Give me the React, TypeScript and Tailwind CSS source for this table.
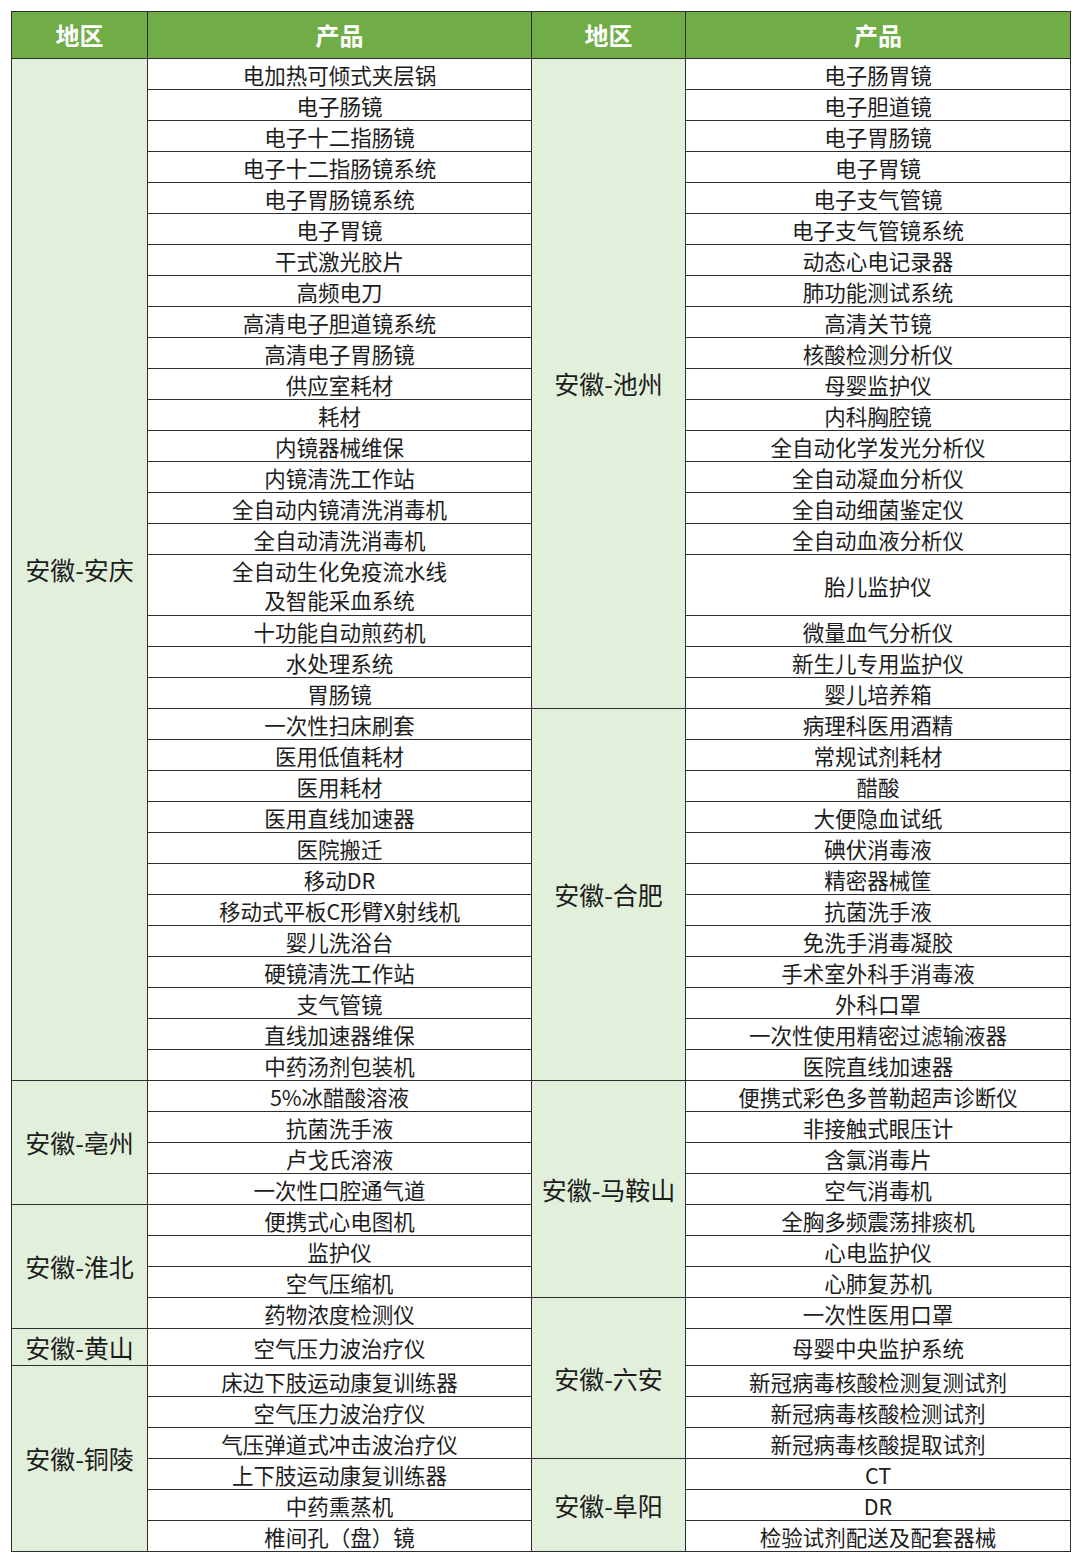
const left: [string, number][] = [
  ["安徽-安庆", 32],
  ["安徽-亳州", 4],
  ["安徽-淮北", 4],
  ["安徽-黄山", 1],
  ["安徽-铜陵", 6],
];

const right: [string, number][] = [
  ["安徽-池州", 20],
  ["安徽-合肥", 12],
  ["安徽-马鞍山", 7],
  ["安徽-六安", 5],
  ["安徽-阜阳", 3],
];

const leftProducts = [
  "电加热可倾式夹层锅",
  "电子肠镜",
  "电子十二指肠镜",
  "电子十二指肠镜系统",
  "电子胃肠镜系统",
  "电子胃镜",
  "干式激光胶片",
  "高频电刀",
  "高清电子胆道镜系统",
  "高清电子胃肠镜",
  "供应室耗材",
  "耗材",
  "内镜器械维保",
  "内镜清洗工作站",
  "全自动内镜清洗消毒机",
  "全自动清洗消毒机",
  "全自动生化免疫流水线\n及智能采血系统",
  "十功能自动煎药机",
  "水处理系统",
  "胃肠镜",
  "一次性扫床刷套",
  "医用低值耗材",
  "医用耗材",
  "医用直线加速器",
  "医院搬迁",
  "移动DR",
  "移动式平板C形臂X射线机",
  "婴儿洗浴台",
  "硬镜清洗工作站",
  "支气管镜",
  "直线加速器维保",
  "中药汤剂包装机",
  "5%冰醋酸溶液",
  "抗菌洗手液",
  "卢戈氏溶液",
  "一次性口腔通气道",
  "便携式心电图机",
  "监护仪",
  "空气压缩机",
  "药物浓度检测仪",
  "空气压力波治疗仪",
  "床边下肢运动康复训练器",
  "空气压力波治疗仪",
  "气压弹道式冲击波治疗仪",
  "上下肢运动康复训练器",
  "中药熏蒸机",
  "椎间孔（盘）镜",
];

const rightProducts = [
  "电子肠胃镜",
  "电子胆道镜",
  "电子胃肠镜",
  "电子胃镜",
  "电子支气管镜",
  "电子支气管镜系统",
  "动态心电记录器",
  "肺功能测试系统",
  "高清关节镜",
  "核酸检测分析仪",
  "母婴监护仪",
  "内科胸腔镜",
  "全自动化学发光分析仪",
  "全自动凝血分析仪",
  "全自动细菌鉴定仪",
  "全自动血液分析仪",
  "胎儿监护仪",
  "微量血气分析仪",
  "新生儿专用监护仪",
  "婴儿培养箱",
  "病理科医用酒精",
  "常规试剂耗材",
  "醋酸",
  "大便隐血试纸",
  "碘伏消毒液",
  "精密器械筐",
  "抗菌洗手液",
  "免洗手消毒凝胶",
  "手术室外科手消毒液",
  "外科口罩",
  "一次性使用精密过滤输液器",
  "医院直线加速器",
  "便携式彩色多普勒超声诊断仪",
  "非接触式眼压计",
  "含氯消毒片",
  "空气消毒机",
  "全胸多频震荡排痰机",
  "心电监护仪",
  "心肺复苏机",
  "一次性医用口罩",
  "母婴中央监护系统",
  "新冠病毒核酸检测复测试剂",
  "新冠病毒核酸检测试剂",
  "新冠病毒核酸提取试剂",
  "CT",
  "DR",
  "检验试剂配送及配套器械",
];

// row index -> [region, rowSpan] for the first row of each region
function starts(groups: [string, number][]) {
  const map: Record<number, [string, number]> = {};
  let i = 0;
  for (const g of groups) {
    map[i] = g;
    i += g[1];
  }
  return map;
}

const leftStart = starts(left);
const rightStart = starts(right);

function rowHeight(i: number) {
  if (i === 16) return "h-[61px]";
  if (i === 40) return "h-[37px]";
  return "h-[31px]";
}

const cell = "border border-[#2e2e2e] text-center align-middle p-0";

export default function App() {
  return (
    <div
      className="w-[1080px] h-[1562px] bg-white pt-[11px] pl-[11px]"
      style={{ fontFamily: '"Noto Sans CJK SC", "Noto Sans", sans-serif' }}
    >
      <table className="table-fixed border-collapse w-[1059px] text-[#1c1c1c]">
        <colgroup>
          <col className="w-[136px]" />
          <col className="w-[384px]" />
          <col className="w-[154px]" />
          <col className="w-[385px]" />
        </colgroup>
        <thead>
          <tr className="h-[47px] bg-[#70ad47] text-white text-[24px] font-bold">
            <th className={`${cell} leading-none`}>地区</th>
            <th className={`${cell} leading-none`}>产品</th>
            <th className={`${cell} leading-none`}>地区</th>
            <th className={`${cell} leading-none`}>产品</th>
          </tr>
        </thead>
        <tbody>
          {leftProducts.map((p, i) => (
            <tr key={i} className={rowHeight(i)}>
              {leftStart[i] && (
                <td rowSpan={leftStart[i][1]} className={`${cell} bg-[#e2efda] text-[25px] leading-none`}>
                  {leftStart[i][0]}
                </td>
              )}
              <td className={`${cell} text-[21.5px] leading-[29px] whitespace-pre-line`}>{p}</td>
              {rightStart[i] && (
                <td rowSpan={rightStart[i][1]} className={`${cell} bg-[#e2efda] text-[25px] leading-none`}>
                  {rightStart[i][0]}
                </td>
              )}
              <td className={`${cell} text-[21.5px] leading-[29px]`}>{rightProducts[i]}</td>
            </tr>
          ))}
        </tbody>
      </table>
    </div>
  );
}
